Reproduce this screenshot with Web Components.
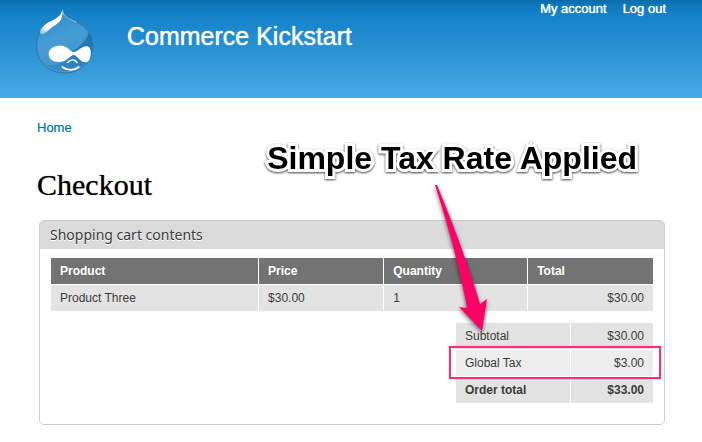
<!DOCTYPE html>
<html lang="en">
<head>
<meta charset="utf-8">
<title>Checkout | Commerce Kickstart</title>
<style>
body { margin: 0; background: #fff; color: #3b3b3b; font: 12px/18px "Liberation Sans", Arial, sans-serif; }
</style>
</head>
<body>
<site-header>
  <nav-link slot="nav" href="#account">My account</nav-link>
  <nav-link slot="nav" href="#logout">Log out</nav-link>
  Commerce Kickstart
</site-header>
<checkout-page heading="Checkout">
  <nav-link slot="trail" href="#home">Home</nav-link>
  <note-caption slot="note">Simple Tax Rate Applied</note-caption>
  <cart-panel heading="Shopping cart contents">
    <cart-items></cart-items>
    <cart-totals></cart-totals>
  </cart-panel>
</checkout-page>

<script>
const define = (name, html, setup) => customElements.define(name, class extends HTMLElement {
  constructor() {
    super();
    this.attachShadow({ mode: "open" }).innerHTML = html;
  }
  connectedCallback() { if (setup) setup(this, this.shadowRoot); }
});

define("nav-link", `
  <style>
    :host { display: inline-block; font-size: 13px; line-height: 18px; }
    a { color: var(--link, #0071b3); text-decoration: none; text-shadow: var(--link-shadow, 0 0 1px #8fc4e4); }
    a:hover { text-decoration: underline; }
  </style>
  <a><slot></slot></a>`,
  (el, root) => { root.querySelector("a").href = el.getAttribute("href"); });

define("drop-logo", `
  <style>:host { display: block; } svg { display: block; }</style>
  <svg width="58" height="65" viewBox="48 26 174 195" role="img" aria-label="Site logo">
    <defs>
      <linearGradient id="skin" x1="0" y1="0" x2=".3" y2="1">
        <stop offset="0" stop-color="#2b88c6"/><stop offset=".5" stop-color="#459bd3"/><stop offset="1" stop-color="#4397cf"/>
      </linearGradient>
      <linearGradient id="shade" x1="1" y1="0" x2="0" y2="1">
        <stop offset="0" stop-color="#1768a8"/><stop offset=".5" stop-color="#2278b6"/><stop offset="1" stop-color="#3a8fca"/>
      </linearGradient>
      <linearGradient id="shine" x1=".8" y1="0" x2=".3" y2="1">
        <stop offset="0" stop-color="#fff"/><stop offset=".75" stop-color="#fff"/><stop offset="1" stop-color="#a7d2ef"/>
      </linearGradient>
    </defs>
    <path d="M127 28C130 48 142 54 170 66C200 79 218 103 218 137C218 185 181 218 134 218C86 218 50 185 50 137C50 105 65 81 86 67C104 56 122 52 127 28Z" fill="url(#skin)" stroke="#3474a3" stroke-width="3"/>
    <path d="M206 96C214 108 217 121 217 138C217 181 181 211 137 212C112 212 90 204 76 191C112 202 129 185 149 160C177 139 199 125 206 96Z" fill="url(#shade)" opacity=".8"/>
    <path d="M127 30C129 53 122 65 103 76C88 84 83 97 67 101C58 101 59 92 65 84C87 57 119 60 127 30Z" fill="url(#shine)"/>
    <path d="M127 28C130 48 142 54 170 66" fill="none" stroke="#a7c3d5" stroke-width="3"/>
    <path d="M117 136C140 134 149 153 160 156C174 154 184 139 199 138C211 137 214 151 212 164C210 180 204 187 194 186C181 184 172 167 162 163C149 166 141 185 117 185C98 185 86 175 86 161C86 146 99 137 117 136Z" fill="#fff"/>
    <path d="M142 187C149 179 161 176 165 181C168 183 169 185 171 187" fill="none" stroke="#fff" stroke-width="4" stroke-linecap="round"/>
    <path d="M127 200C142 212 163 211 176 200" fill="none" stroke="#fff" stroke-width="5" stroke-linecap="round"/>
  </svg>`);

define("site-header", `
  <style>
    :host { display: block; color: #fff; background: linear-gradient(#0b6cab 0, #0f79be 6px, #1482c9 16px, #48a9e4 100%); --link: #fff; }
    header { display: grid; grid-template-columns: auto 1fr auto; padding: 0 36px; min-height: 98px; box-sizing: border-box; align-items: start; }
    drop-logo { padding-top: 9px; }
    .name { padding: 22px 0 0 33px; font-size: 25px; line-height: 28px; text-shadow: 0 0 1px #fff; }
    nav { display: flex; gap: 16px; --link-shadow: 0 0 1px #fff; }
  </style>
  <header>
    <drop-logo></drop-logo>
    <div class="name"><slot></slot></div>
    <nav><slot name="nav"></slot></nav>
  </header>`);

define("checkout-page", `
  <style>
    :host { display: block; }
    main { position: relative; padding: 21px 37px 17px; }
    nav { line-height: 18px; }
    nav ::slotted(*) { vertical-align: top; }
    h1 { margin: 30px 0 17px; color: #000; font: 30px/36px "Liberation Serif", Georgia, serif; text-shadow: 0 0 1px #555; }
    .body { padding-left: 2px; }
  </style>
  <main>
    <nav aria-label="Breadcrumb"><slot name="trail"></slot></nav>
    <h1></h1>
    <div class="body"><slot></slot></div>
    <slot name="note"></slot>
  </main>`,
  (el, root) => { root.querySelector("h1").textContent = el.getAttribute("heading"); });

define("cart-panel", `
  <style>
    :host { display: block; }
    section { border: 1px solid #ccc; border-radius: 5px; }
    h2 { margin: 0; padding: 4px 10px; border-radius: 4px 4px 0 0; background: #dbdbdb; color: #3b3b3b; font: 14px/20px "Noto Sans", "Open Sans", sans-serif; text-shadow: 0 1px 0 #fff; }
    .content { display: grid; gap: 12px; padding: 9px 11px 21px; }
  </style>
  <section>
    <h2></h2>
    <div class="content"><slot></slot></div>
  </section>`,
  (el, root) => { root.querySelector("h2").textContent = el.getAttribute("heading"); });

const tableStyle = `
  table { width: 100%; border-collapse: separate; border-spacing: 0; table-layout: fixed; }
  th, td { padding: 4px 9px; text-align: left; background: #e3e3e3; font-weight: normal; }
  tr > * + * { border-left: 1px solid #fff; }
  tr + tr > *, tbody.rows > tr > * { border-top: 1px solid #fff; }
  .num { text-align: right; }`;

define("cart-items", `
  <style>
    :host { display: block; }
    ${tableStyle}
    thead th { background: #737373; color: #fff; font-weight: bold; }
  </style>
  <table>
    <colgroup><col style="width:34.4%"><col style="width:20.8%"><col style="width:23.9%"><col></colgroup>
    <thead><tr><th scope="col">Product</th><th scope="col">Price</th><th scope="col">Quantity</th><th scope="col">Total</th></tr></thead>
    <tbody class="rows"><tr><td>Product Three</td><td>$30.00</td><td>1</td><td class="num">$30.00</td></tr></tbody>
  </table>`);

define("note-arrow", `
  <style>
    :host { position: absolute; left: -25px; top: -142px; pointer-events: none; }
    svg { display: block; overflow: visible; filter: drop-shadow(0 2px 2px rgba(0,0,0,.6)); }
  </style>
  <svg width="60" height="152" viewBox="431 181 60 152" aria-hidden="true">
    <path d="M435 185L437 185Q464 250 480 304L487 299L482 331L459 307L467 308Q457 253 435 185Z" fill="#ff0066"/>
  </svg>`);

define("cart-totals", `
  <style>
    :host { display: block; position: relative; justify-self: end; width: 197px; }
    ${tableStyle}
    .tax { position: relative; }
    .tax > * { background: #ededed; }
    .grand > * { font-weight: bold; }
    .mark { position: absolute; inset: -3px -8px -3px -7px; border: 2px solid #ff2b7b; box-shadow: 0 0 1px #ff80ae; pointer-events: none; }
  </style>
  <table aria-label="Order totals">
    <colgroup><col style="width:58%"><col></colgroup>
    <tbody>
      <tr><th scope="row">Subtotal</th><td class="num">$30.00</td></tr>
      <tr class="tax"><th scope="row">Global Tax<span class="mark"></span></th><td class="num">$3.00</td></tr>
      <tr class="grand"><th scope="row">Order total</th><td class="num">$33.00</td></tr>
    </tbody>
  </table>
  <note-arrow></note-arrow>`);

define("note-caption", `
  <style>
    :host { position: absolute; right: 65px; top: 42px; color: #000; font-weight: bold; font-size: 32px; line-height: 36px; white-space: nowrap; }
    span { -webkit-text-stroke: 6px #fff; stroke-linejoin: round; paint-order: stroke fill; filter: drop-shadow(0 1px 1px rgba(0,0,0,.75)); }
  </style>
  <span><slot></slot></span>`);
</script>
</body>
</html>
